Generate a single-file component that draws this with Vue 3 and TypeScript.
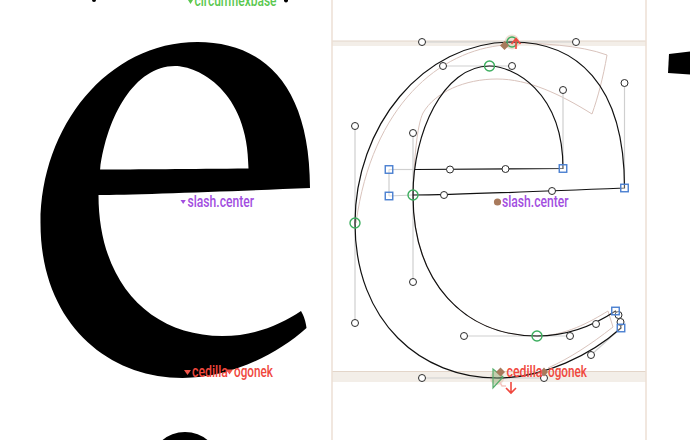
<script setup lang="ts">
interface Pt {
  x: number
  y: number
}

const outer =
  'M512 42C576 42 624.5 83 624.5 188C552 191 444 195 413 195C413 282 464 336 537 336C570 336 596 324 615.5 311C618 315 620.5 322 621 328C591 355 544 378 497 378C422 378 355 323 355 223C355 127 422 42 512 42Z'
const counter = 'M414.6 169.5C450 169.5 505.5 169 563 168.5C563 90 512 66 489.5 66'

// the stroke overshoots the bar and meets the lower edge, the fill stops at the bar
const contour = outer + counter + 'C443 66 413 133 413 195'
const filled = outer + counter + 'C449.3 66 421.4 116.1 414.6 169.5Z'

const ghost =
  'M508 43C540 43 580 45 607 55C603 78 598 97 592 114C560 94 528 79 497 79C465 79 435 92 423 113C417 125 414 160 413 195C413 282 464 336 537 336C565 336 590 322 608 311L613 327C590 345 570 358 548 368M505 45C440 50 372 105 356 223'

const handles: [number, number, number, number][] = [
  [422, 42, 512, 42],
  [512, 42, 576, 42],
  [624.5, 83, 624.5, 188],
  [563, 90, 563, 168.5],
  [443, 66, 512, 66],
  [355, 127, 355, 323],
  [413, 133, 413, 282],
  [389, 169.5, 414, 169.5],
  [389, 196, 413, 195],
  [389, 169.5, 389, 196],
  [464, 336, 570, 336],
  [422, 378, 544, 378],
  [621, 328, 591, 355],
]

const offCurve: Pt[] = [
  { x: 422, y: 42 },
  { x: 576, y: 42 },
  { x: 443, y: 66 },
  { x: 512, y: 66 },
  { x: 563, y: 90 },
  { x: 624.5, y: 83 },
  { x: 355, y: 126 },
  { x: 413, y: 133 },
  { x: 450, y: 169.5 },
  { x: 505.5, y: 169 },
  { x: 444, y: 195 },
  { x: 552, y: 191 },
  { x: 413, y: 282 },
  { x: 355, y: 323 },
  { x: 464, y: 336 },
  { x: 570, y: 336 },
  { x: 596, y: 324 },
  { x: 618.5, y: 315 },
  { x: 620.5, y: 322 },
  { x: 591, y: 355 },
  { x: 422, y: 378 },
  { x: 544, y: 378 },
]

const smooth: Pt[] = [
  { x: 489.5, y: 66 },
  { x: 355, y: 223 },
  { x: 413, y: 195 },
  { x: 537, y: 336 },
]

const corners: Pt[] = [
  { x: 389, y: 169.5 },
  { x: 389, y: 196 },
  { x: 563, y: 168.5 },
  { x: 624.5, y: 188 },
  { x: 615.5, y: 311 },
  { x: 621, y: 328 },
]

const redMarks: Pt[] = [
  { x: 187.5, y: 370 },
  { x: 229.5, y: 369.5 },
]
</script>

<template>
  <div class="canvas">
    <svg class="stage" width="690" height="440" viewBox="0 0 690 440">
      <!-- sidebearings and alignment zones -->
      <rect class="zone" x="332" y="41" width="314" height="5" />
      <rect class="zone" x="332" y="371" width="314" height="11" />
      <line class="zone-edge" x1="332" y1="41" x2="646" y2="41" />
      <line class="zone-edge" x1="332" y1="371.5" x2="646" y2="371.5" />
      <line class="bearing" x1="332" y1="0" x2="332" y2="440" />
      <line class="bearing" x1="646" y1="0" x2="646" y2="440" />

      <!-- filled preview on the left -->
      <path :d="filled" fill-rule="evenodd" transform="translate(-314.5 0)" />
      <ellipse cx="185" cy="462" rx="33" ry="30" />
      <path d="M669 54L690 51.5V74.5L668 73Z" />
      <circle cx="94" cy="0" r="2" />
      <circle cx="286" cy="0.5" r="2" />

      <!-- edit view on the right -->
      <circle class="halo" cx="512" cy="42" r="7.5" />
      <circle class="halo" cx="497" cy="378" r="7" />
      <path class="ghost" :d="ghost" />
      <path class="ghost-end" d="M499 381L502 386H506" />
      <line
        v-for="(h, i) in handles"
        :key="'h' + i"
        class="handle"
        :x1="h[0]"
        :y1="h[1]"
        :x2="h[2]"
        :y2="h[3]"
      />
      <path class="contour" :d="contour" />
      <circle v-for="(p, i) in offCurve" :key="'o' + i" class="off" :cx="p.x" :cy="p.y" r="3.5" />
      <circle v-for="(p, i) in smooth" :key="'s' + i" class="on" :cx="p.x" :cy="p.y" r="5" />
      <rect
        v-for="(p, i) in corners"
        :key="'c' + i"
        class="corner"
        :x="p.x - 3.75"
        :y="p.y - 3.75"
        width="7.5"
        height="7.5"
      />
      <circle class="on" cx="512" cy="42" r="5" />
      <path class="start" d="M493 369V388L503 377Z" />

      <!-- anchors -->
      <path class="anchor" d="M504.5 41L509 45.5L504.5 50L500 45.5Z" />
      <path class="anchor" d="M500.5 367.5L505 372L500.5 376.5L496 372Z" />
      <path class="anchor" d="M544 367.5L548 372L544 376.5L540 372Z" />
      <circle class="anchor" cx="497.5" cy="202" r="3.6" />
      <path class="arrow" d="M516 49V38.5M511.5 44L516 38.5L520.5 44" />
      <path class="arrow" d="M511 382V393M506 388L511 393L516 388" />

      <path class="mark-green" d="M188 0H193L190.5 4Z" />
      <path class="mark-purple" d="M180.5 200H185.8L183.2 204Z" />
      <path
        v-for="(p, i) in redMarks"
        :key="'m' + i"
        class="mark-red"
        :d="`M${p.x - 3.5} ${p.y}H${p.x + 3.5}L${p.x} ${p.y + 5}Z`"
      />

      <text class="label green" x="194.5" y="6" textLength="82" lengthAdjust="spacingAndGlyphs">circumflexbase</text>
      <text class="label purple" x="187.5" y="207" textLength="66.5" lengthAdjust="spacingAndGlyphs">slash.center</text>
      <text class="label purple" x="502" y="207" textLength="66.5" lengthAdjust="spacingAndGlyphs">slash.center</text>
      <text class="label red" x="192" y="377" textLength="36" lengthAdjust="spacingAndGlyphs">cedilla</text>
      <text class="label red" x="234" y="377" textLength="39" lengthAdjust="spacingAndGlyphs">ogonek</text>
      <text class="label red" x="506.5" y="377" textLength="36" lengthAdjust="spacingAndGlyphs">cedilla</text>
      <text class="label red" x="548" y="377" textLength="39" lengthAdjust="spacingAndGlyphs">ogonek</text>
    </svg>
  </div>
</template>

<style>
html,
body {
  background: #fff;
}
</style>

<style scoped>
.canvas {
  width: 690px;
  height: 440px;
  overflow: hidden;
  background: #fff;
}

.stage {
  display: block;
}

.zone {
  fill: #f3eee8;
}

.zone-edge {
  stroke: #e3d5c9;
  stroke-width: 1;
}

.bearing {
  stroke: #ecdfd5;
  stroke-width: 1.5;
}

.halo {
  fill: #d9b9a0;
  opacity: 0.45;
}

.ghost {
  fill: none;
  stroke: #d9c3bc;
  stroke-width: 1;
}

.ghost-end {
  fill: none;
  stroke: #f6c6c0;
  stroke-width: 1.5;
}

.handle {
  stroke: #cfcfcf;
  stroke-width: 1.2;
}

.contour {
  fill: none;
  stroke: #111;
  stroke-width: 1.2;
}

.off {
  fill: #fff;
  stroke: #2b2b2b;
  stroke-width: 1;
}

.on {
  fill: none;
  stroke: #3dae5f;
  stroke-width: 1.4;
}

.corner {
  fill: rgba(255, 255, 255, 0.3);
  stroke: #4a7fd0;
  stroke-width: 1.4;
}

.start {
  fill: rgba(90, 180, 100, 0.25);
  stroke: #55ad6a;
  stroke-width: 1.2;
}

.anchor {
  fill: #a87a5c;
}

.arrow {
  fill: none;
  stroke: #f0483e;
  stroke-width: 1.6;
}

.mark-green {
  fill: #5ac84f;
}

.mark-purple {
  fill: #a24ee0;
}

.mark-red {
  fill: #f0544a;
}

.label {
  font-family: Roboto, "Liberation Sans", sans-serif;
  font-size: 17px;
  font-weight: 500;
}

.green {
  fill: #5ac84f;
}

.purple {
  fill: #a24ee0;
}

.red {
  fill: #f0483e;
}
</style>
